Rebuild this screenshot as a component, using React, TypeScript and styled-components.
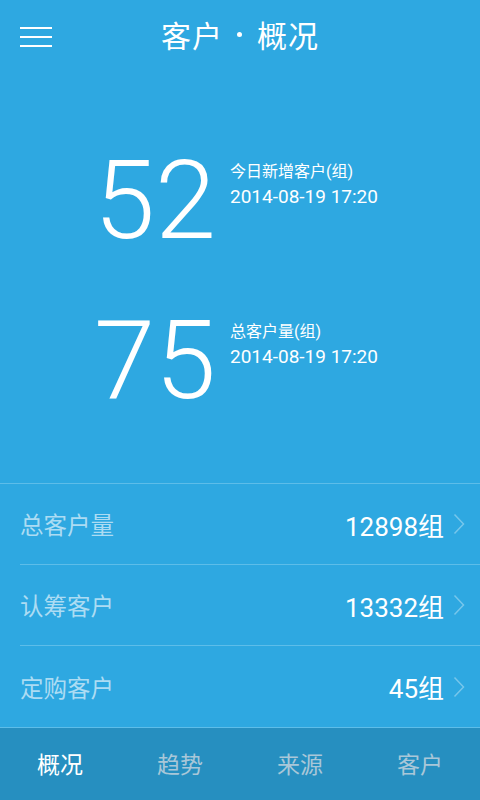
import React from "react";
import styled, { createGlobalStyle } from "styled-components";

const GlobalStyle = createGlobalStyle`
html, body {
  margin: 0;
  padding: 0;
  background: #2ea8e1;
}
* { box-sizing: border-box; }
`

const Page = styled.div`
width: 480px;
height: 800px;
display: flex;
flex-direction: column;
background: #2ea8e1;
color: #fff;
font-family: Roboto, "Noto Sans CJK SC", sans-serif;
overflow: hidden;
`

const Header = styled.header`
height: 74px;
padding-bottom: 6px;
position: relative;
display: flex;
align-items: center;
justify-content: center;
`

const MenuButton = styled.div`
position: absolute;
left: 20px;
top: 27px;
width: 32px;
display: flex;
flex-direction: column;
gap: 7px;
span {
  display: block;
  height: 2px;
  background: #fff;
}
`

const Title = styled.h1`
margin: 0;
font-size: 30px;
font-weight: 400;
letter-spacing: 1px;
display: flex;
align-items: center;
`

const Dot = styled.span`
width: 5px;
height: 5px;
border-radius: 50%;
background: #fff;
margin: 0 15px 0 14px;
`

const Hero = styled.section`
flex: 1;
display: flex;
flex-direction: column;
gap: 50px;
padding: 72px 0 0 94px;
`

const Stat = styled.div`
display: flex;
align-items: flex-start;
`

const BigNumber = styled.div`
font-size: 110px;
font-weight: 300;
line-height: 110px;
width: 128px;
`

const StatInfo = styled.div`
display: flex;
flex-direction: column;
gap: 4px;
padding-top: 16px;
margin-left: 8px;
`

const StatLabel = styled.div`
font-size: 16px;
line-height: 20px;
`

const StatDate = styled.div`
font-size: 19px;
line-height: 22px;
`

const List = styled.ul`
list-style: none;
margin: 0;
padding: 0;
border-top: 1px solid #5dbde9;
`

const Row = styled.li<{ $last?: boolean }>`
height: 81px;
margin-left: 20px;
padding-right: 15px;
display: flex;
align-items: center;
border-bottom: ${(p) => (p.$last ? "none" : "1px solid #5dbde9")};
`

const RowLabel = styled.span`
flex: 1;
font-size: 23.5px;
color: #acdcf3;
`

const RowValue = styled.span`
font-size: 26px;
margin-right: 9px;
`

const TabBar = styled.nav`
height: 73px;
padding-bottom: 3px;
display: grid;
grid-template-columns: repeat(4, 1fr);
background: #268fc0;
border-top: 1px solid #5dbde9;
`

const Tab = styled.div<{ $active?: boolean }>`
display: flex;
align-items: center;
justify-content: center;
font-size: 23px;
color: ${(p) => (p.$active ? "#fff" : "#a9c7d8")};
`

const Chevron = () => (
  <svg width="12" height="22" viewBox="0 0 12 22">
    <path d="M1.5 1.5 L10.5 11 L1.5 20.5" fill="none" stroke="rgba(255,255,255,0.35)" strokeWidth="1.5" />
  </svg>
)

const stats = [
  { value: "52", label: "今日新增客户(组)", date: "2014-08-19 17:20" },
  { value: "75", label: "总客户量(组)", date: "2014-08-19 17:20" },
]

const rows = [
  { label: "总客户量", value: "12898组" },
  { label: "认筹客户", value: "13332组" },
  { label: "定购客户", value: "45组" },
]

const tabs = ["概况", "趋势", "来源", "客户"]

const App = () => {
  return (
    <>
      <GlobalStyle />
      <Page>
        <Header>
          <MenuButton>
            <span />
            <span />
            <span />
          </MenuButton>
          <Title>
            客户<Dot />概况
          </Title>
        </Header>
        <Hero>
          {stats.map((s) => (
            <Stat key={s.value}>
              <BigNumber>{s.value}</BigNumber>
              <StatInfo>
                <StatLabel>{s.label}</StatLabel>
                <StatDate>{s.date}</StatDate>
              </StatInfo>
            </Stat>
          ))}
        </Hero>
        <List>
          {rows.map((r, i) => (
            <Row key={r.label} $last={i === rows.length - 1}>
              <RowLabel>{r.label}</RowLabel>
              <RowValue>{r.value}</RowValue>
              <Chevron />
            </Row>
          ))}
        </List>
        <TabBar>
          {tabs.map((t, i) => (
            <Tab key={t} $active={i === 0}>{t}</Tab>
          ))}
        </TabBar>
      </Page>
    </>
  );
};

export default App;
